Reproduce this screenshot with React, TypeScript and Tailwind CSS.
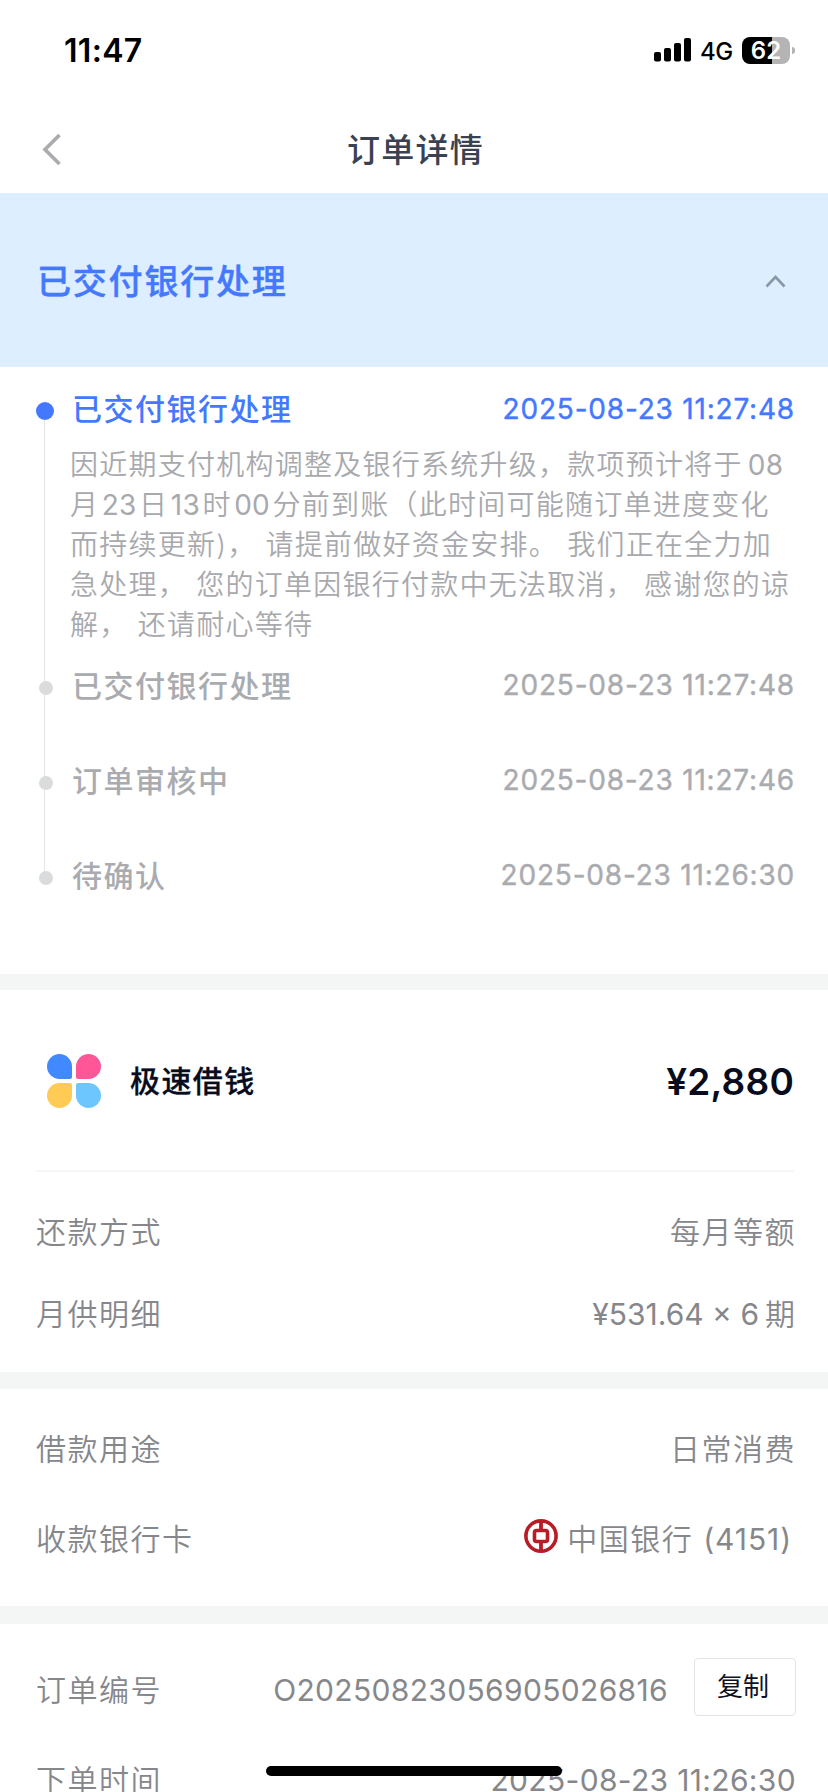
import type { ReactNode } from 'react';

const notice = [
  '因近期支付机构调整及银行系统升级，款项预计将于08',
  '月23日13时00分前到账（此时间可能随订单进度变化',
  '而持续更新)， 请提前做好资金安排。 我们正在全力加',
  '急处理， 您的订单因银行付款中无法取消， 感谢您的谅',
  '解， 还请耐心等待',
];

const history = [
  { title: '已交付银行处理', time: '2025-08-23 11:27:48' },
  { title: '订单审核中', time: '2025-08-23 11:27:46' },
  { title: '待确认', time: '2025-08-23 11:26:30' },
];

function StatusBar() {
  return (
    <div className="flex h-[100px] shrink-0 items-center justify-between pl-16 pr-[33px] text-black">
      <span className="pt-px text-[32px] font-semibold leading-none tracking-[0.3px]">11:47</span>
      <div className="flex items-center">
        <svg width="38" height="24" viewBox="0 0 38 24">
          <rect x="0" y="14" width="7" height="9.5" rx="2" />
          <rect x="10" y="10" width="7" height="13.5" rx="2" />
          <rect x="20" y="5" width="7" height="18.5" rx="2" />
          <rect x="30" y="0" width="7" height="23.5" rx="2" />
        </svg>
        <span className="ml-2 w-[42px] pt-[3px] text-[24px] font-medium leading-none tracking-[-0.4px]">4G</span>
        <div className="flex h-[27px] w-12 items-center justify-center rounded-lg bg-[linear-gradient(to_right,#000_62.5%,#b4b4b4_62.5%)] pt-0.5 text-[24px] font-semibold leading-none text-white">
          62
        </div>
        <div className="ml-0.5 h-[7px] w-[3px] rounded-r-full bg-[#b4b4b4]" />
      </div>
    </div>
  );
}

function Header() {
  return (
    <div className="grid h-[93px] shrink-0 grid-cols-[1fr_auto_1fr] items-center px-[42px] pt-[7px]">
      <svg className="mb-0.5" width="20" height="32" viewBox="0 0 20 32" fill="none" stroke="#a9abae" strokeWidth="3.6">
        <path d="M17.5 2 L3 16.5 L17.5 31" />
      </svg>
      <h1 className="pl-[3px] text-[33px] font-medium leading-none tracking-[1.3px] text-[#3a4252]">订单详情</h1>
    </div>
  );
}

function TimelineRow({ title, time, active }: { title: string; time: string; active?: boolean }) {
  return (
    <div className={active ? 'flex h-11 items-center font-medium text-[#4479ff]' : 'flex h-[95px] items-start font-medium text-[#aaabaf]'}>
      <div className="relative flex h-11 w-9 shrink-0 items-center pt-1">
        {active ? <i className="block size-[18px] rounded-full bg-[#4479ff]" /> : <i className="ml-[3px] block size-3.5 rounded-full bg-[#dadbdc]" />}
      </div>
      <span className="text-[30px] leading-[44px] tracking-[1.5px]">{title}</span>
      <span className="ml-auto text-[28px] font-normal leading-[42px] tracking-[0.8px] [-webkit-text-stroke:0.4px_currentColor]">{time}</span>
    </div>
  );
}

function Logo() {
  return (
    <svg width="54" height="54" viewBox="0 0 54 54">
      <path d="M12.5 0A12.5 12.5 0 0 1 25 12.5V23a2 2 0 0 1-2 2H12.5A12.5 12.5 0 0 1 12.5 0Z" fill="#4189ff" />
      <path d="M41.5 0A12.5 12.5 0 0 1 41.5 25H31a2 2 0 0 1-2-2V12.5A12.5 12.5 0 0 1 41.5 0Z" fill="#ff5698" />
      <path d="M12.5 29H23a2 2 0 0 1 2 2V41.5A12.5 12.5 0 1 1 12.5 29Z" fill="#ffcb55" />
      <path d="M31 29H41.5A12.5 12.5 0 1 1 29 41.5V31a2 2 0 0 1 2-2Z" fill="#6ec6ff" />
    </svg>
  );
}

function BankIcon() {
  return (
    <svg className="mb-[7px]" width="34" height="34" viewBox="0 0 34 34" fill="none" stroke="#b81c27">
      <circle cx="17" cy="17" r="15.1" strokeWidth="3.6" />
      <rect x="10.5" y="11.5" width="13" height="11" rx="2" strokeWidth="3.6" />
      <path d="M17 2V11M17 23V32" strokeWidth="3.8" />
    </svg>
  );
}

function Row({ label, children, className }: { label: string; children: ReactNode; className: string }) {
  return (
    <div className={`flex items-center justify-between text-[30px] leading-none text-[#86878b] ${className}`}>
      <span className="font-[350] tracking-[1.5px]">{label}</span>
      {children}
    </div>
  );
}

export default function App() {
  return (
    <div className="relative flex h-[1792px] w-[828px] flex-col overflow-hidden bg-white font-['Inter','Noto_Sans_CJK_SC',sans-serif]">
      <StatusBar />
      <Header />

      <div className="flex h-[174px] shrink-0 items-center justify-between bg-[#dceeff] pl-[37px] pr-[42px] pt-[3px]">
        <h2 className="text-[34px] font-medium leading-none tracking-[1.8px] text-[#4479ff] [-webkit-text-stroke:0.4px_currentColor]">已交付银行处理</h2>
        <svg width="21" height="13" viewBox="0 0 21 13" fill="none" stroke="#8b97a5" strokeWidth="2.6">
          <path d="M1.5 11.5 L10.5 2 L19.5 11.5" />
        </svg>
      </div>

      <section className="relative h-[607px] shrink-0 pl-9 pr-[33px] pt-5">
        <div className="absolute left-11 top-11 h-[460px] w-px bg-[#e4e4e6]" />
        <TimelineRow title="已交付银行处理" time="2025-08-23 11:27:48" active />
        <div className="h-[233px] whitespace-pre pl-[34px] pt-[15px] text-[28px] font-[350] leading-[39.9px] tracking-[1.25px] text-[#a8a9ad]">
          {notice.map(line => (
            <p key={line}>
              {line.split(/(\d+)/).map((part, i) => (i % 2 ? <span key={i} className="mx-[2.5px] font-normal tracking-[0.2px] only:ml-[5px]">{part}</span> : part))}
            </p>
          ))}
        </div>
        {history.map(h => <TimelineRow key={h.time} {...h} />)}
      </section>

      <div className="h-4 shrink-0 bg-[#f4f6f6]" />

      <section className="h-[382px] shrink-0 pl-9 pr-8">
        <div className="mr-0.5 flex h-[182px] items-center border-b-2 border-[#f6f6f7] pl-[11px] pt-0.5 text-[#080c1c]">
          <Logo />
          <span className="ml-[29px] text-[30px] font-medium leading-none tracking-[1.4px] [-webkit-text-stroke:0.3px_currentColor]">极速借钱</span>
          <span className="ml-auto text-[37px] font-semibold leading-none tracking-[0.2px]">¥2,880</span>
        </div>
        <Row label="还款方式" className="mt-[19px] h-[82px]">
          <span className="font-[350] tracking-[1.5px]">每月等额</span>
        </Row>
        <Row label="月供明细" className="h-[82px]">
          <span className="mr-px">¥531.64 × 6<span className="ml-1.5 font-[350]">期</span></span>
        </Row>
      </section>

      <div className="h-[17px] shrink-0 bg-[#f4f6f6]" />

      <section className="h-[217px] shrink-0 pl-9 pr-8 pt-[15px]">
        <Row label="借款用途" className="h-[90px]">
          <span className="font-[350] tracking-[1.5px]">日常消费</span>
        </Row>
        <Row label="收款银行卡" className="h-[90px]">
          <span className="mr-1 flex items-center">
            <BankIcon />
            <span className="ml-[9px] font-[350] tracking-[1.5px]">
              中国银行 <span className="font-normal tracking-[0.9px]">(4151)</span>
            </span>
          </span>
        </Row>
      </section>

      <div className="h-[18px] shrink-0 bg-[#f4f6f6]" />

      <section className="shrink-0 pl-9 pr-8 pt-[21px]">
        <Row label="订单编号" className="h-[90px]">
          <span className="flex items-center">
            <span className="tracking-[0.34px]">O20250823056905026816</span>
            <button className="ml-[26px] mb-1.5 h-[58px] w-[102px] rounded-[4px] border border-[#e3e4e8] pr-1 text-[26px] font-normal text-[#10131f]">复制</button>
          </span>
        </Row>
        <Row label="下单时间" className="h-[90px]">
          <span className="tracking-[0.34px]">2025-08-23 11:26:30</span>
        </Row>
      </section>

      {/* home indicator */}
      <div className="absolute bottom-4 left-[266px] h-2.5 w-[296px] rounded-full bg-black" />
    </div>
  );
}
